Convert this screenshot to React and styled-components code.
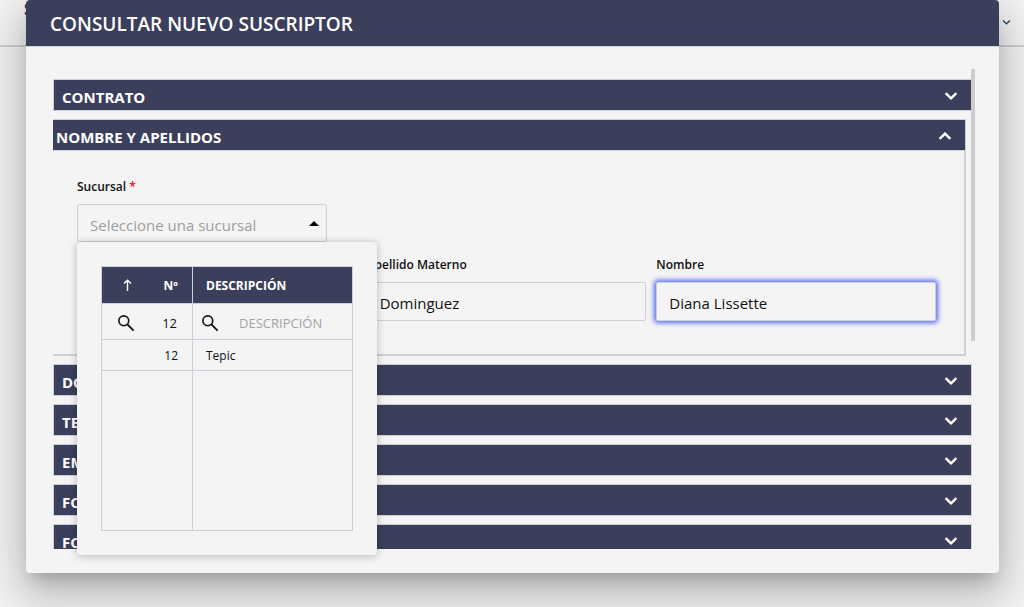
import React from "react";
import styled, { createGlobalStyle } from "styled-components";

const NAVY = "#3c3f5c";
const SURFACE = "#f4f4f4";
const LINE = "#cdd0da";

const GlobalStyle = createGlobalStyle`
  * { box-sizing: border-box; }
  body {
    margin: 0;
    background: #f3f3f3;
    color: #111;
    font-family: "Open Sans", "Noto Sans", sans-serif;
    overflow: hidden;
  }
  input, select, button { font-family: inherit; margin: 0; }
`;

const Page = styled.div`
  display: grid;
  min-height: 100vh;
  grid-template: "stack" 1fr / 1fr;
`;

const TopBar = styled.header`
  grid-area: stack;
  align-self: start;
  display: flex;
  align-items: flex-start;
  justify-content: space-between;
  height: 47px;
  padding: 0 13px 0 24px;
  border-bottom: 2px solid #cfcfcf;
`;

const Brand = styled.span`
  color: #1d2a5c;
  font-size: 16px;
  font-weight: 700;
  line-height: 18px;
`;

const MenuButton = styled.button`
  display: flex;
  padding: 19px 0 0;
  border: 0;
  background: none;
`;

const Dialog = styled.section`
  grid-area: stack;
  align-self: start;
  position: relative;
  margin: 0 25px 0 26px;
  border-radius: 4px;
  background: ${SURFACE};
  box-shadow:
    0 11px 15px -7px rgba(0, 0, 0, 0.2),
    0 24px 38px 3px rgba(0, 0, 0, 0.14),
    0 9px 46px 8px rgba(0, 0, 0, 0.12);
`;

const DialogHeader = styled.header`
  padding: 10px 24px 8px;
  border-bottom: 1px solid ${LINE};
  border-radius: 4px 4px 0 0;
  background: ${NAVY};
`;

const DialogTitle = styled.h1`
  margin: 0;
  color: #fff;
  font-size: 19px;
  font-weight: 600;
  line-height: 28px;
`;

const DialogBody = styled.div`
  display: flex;
  padding: 22px 24px 24px 27px;
`;

const Accordion = styled.div`
  flex: 1;
  display: flex;
  flex-direction: column;
  gap: 8px;
  height: calc(100vh - 127px);
  padding-top: 10px;
  overflow: hidden;
`;

const ScrollThumb = styled.div`
  z-index: 1;
  width: 4px;
  height: 272px;
  margin-left: -1px;
  background: #cdcdcd;
`;

const Panel = styled.section`
  flex: none;
  margin-right: ${(p) => (p.$open ? "6px" : "0")};
`;

const PanelHeading = styled.h2`
  margin: 0;
`;

const PanelToggle = styled.button`
  display: flex;
  align-items: center;
  justify-content: space-between;
  width: 100%;
  height: 32px;
  padding: ${(p) => (p.$open ? "4px 13px 0 3px" : "4px 13px 0 8px")};
  border: 1px solid ${LINE};
  border-left-width: ${(p) => (p.$open ? "0" : "1px")};
  background: ${NAVY};
  color: #fff;
  font-size: 15px;
  font-weight: 700;
  line-height: 20px;
  text-align: left;
`;

const PanelContent = styled.div`
  padding: 27px 28px 33px 24px;
  border: solid #d0d0d0;
  border-width: 0 2px 2px 0;
`;

const FieldRow = styled.div`
  display: grid;
  grid-template-columns: repeat(3, 1fr);
  gap: 10px;
  margin-top: 14px;
`;

const Field = styled.div`
  display: flex;
  flex-direction: column;
  gap: 8px;
  min-width: 0;
`;

const Label = styled.label`
  color: #111;
  font-size: 12px;
  font-weight: 600;
  line-height: 18px;
`;

const Required = styled.span`
  color: #f00;
`;

const TextInput = styled.input`
  width: 100%;
  height: 39px;
  padding: 2px 12px 0;
  border: 1px solid ${LINE};
  border-radius: 2px;
  outline: 0;
  background: ${SURFACE};
  color: #111;
  font-size: 15px;
  box-shadow: ${(p) => (p.$focused ? "0 0 5px 2px #5668ee" : "none")};
`;

const SelectBox = styled.div`
  display: grid;
  align-items: center;
  width: 250px;
  height: 38px;
  border: 1px solid ${LINE};
  border-radius: 2px;

  > * { grid-area: 1 / 1; }
  > svg { justify-self: end; margin-right: 7px; pointer-events: none; }
`;

const Select = styled.select`
  appearance: none;
  width: 100%;
  height: 36px;
  padding: 4px 28px 0 12px;
  border: 0;
  outline: 0;
  background: transparent;
  color: #9e9e9e;
  font-size: 15px;
`;

const Popup = styled.div`
  position: absolute;
  z-index: 2;
  width: 300px;
  padding: 24px;
  border-radius: 4px;
  background: ${SURFACE};
  box-shadow: 0 1px 8px rgba(0, 0, 0, 0.26);
`;

const Grid = styled.table`
  width: 100%;
  table-layout: fixed;
  border-collapse: collapse;
  font-size: 12px;

  th, td { border: 1px solid ${LINE}; }
`;

const HeadCell = styled.th`
  width: ${(p) => p.$width || "auto"};
  height: 37px;
  padding: 0 14px 0 13px;
  background: ${NAVY};
  color: #fff;
  font-size: 12px;
  font-weight: 700;
  text-align: left;
`;

const HeadContent = styled.div`
  display: flex;
  align-items: center;
  justify-content: space-between;
  padding-left: 8px;
`;

const FilterCell = styled.td`
  height: 36px;
  padding: 2px 15px 0 ${(p) => (p.$narrow ? "15px" : "8px")};
`;

const FilterBox = styled.div`
  display: flex;
  align-items: center;
  justify-content: space-between;
  gap: ${(p) => (p.$narrow ? "8px" : "20px")};
`;

const FilterInput = styled.input`
  flex: 1;
  min-width: 0;
  height: 28px;
  padding: 0;
  border: 0;
  outline: 0;
  background: transparent;
  color: #111;
  font-size: 13px;
  text-align: ${(p) => p.$align || "left"};

  &::placeholder { color: #a2a2a2; opacity: 1; }
`;

const Cell = styled.td`
  height: ${(p) => (p.$filler ? "160px" : "31px")};
  padding: 0 14px 0 13px;
  font-size: 12px;
  text-align: ${(p) => p.$align || "left"};
`;

const Chevron = ({ up }) => (
  <svg width="14" height="10" viewBox="0 0 14 10" fill="none" aria-hidden="true">
    <path
      d={up ? "M1.6 6.8 L7 1.6 L12.4 6.8" : "M1.6 1.2 L7 6.4 L12.4 1.2"}
      stroke="#fff"
      strokeWidth="2.4"
    />
  </svg>
);

const SearchIcon = () => (
  <svg width="18" height="18" viewBox="0 0 18 18" fill="none" aria-hidden="true">
    <circle cx="6.8" cy="6.8" r="4.9" stroke="#111" strokeWidth="1.6" />
    <path d="M10.4 10.4 L16.6 16.6" stroke="#111" strokeWidth="1.9" />
  </svg>
);

const SortArrow = () => (
  <svg width="9" height="12" viewBox="0 0 9 12" fill="none" aria-hidden="true">
    <path d="M4.5 12 V1.4 M1 4.6 L4.5 1.2 L8 4.6" stroke="#fff" strokeWidth="1.4" />
  </svg>
);

function BranchPicker() {
  return (
    <Popup>
      <Grid>
        <thead>
          <tr>
            <HeadCell $width="91px">
              <HeadContent>
                <SortArrow />
                <span>Nº</span>
              </HeadContent>
            </HeadCell>
            <HeadCell>DESCRIPCIÓN</HeadCell>
          </tr>
        </thead>
        <tbody>
          <tr>
            <FilterCell $narrow>
              <FilterBox $narrow>
                <SearchIcon />
                <FilterInput aria-label="Filtrar Nº" defaultValue="12" $align="right" />
              </FilterBox>
            </FilterCell>
            <FilterCell>
              <FilterBox>
                <SearchIcon />
                <FilterInput aria-label="Filtrar descripción" placeholder="DESCRIPCIÓN" />
              </FilterBox>
            </FilterCell>
          </tr>
          <tr>
            <Cell $align="right">12</Cell>
            <Cell>Tepic</Cell>
          </tr>
          <tr>
            <Cell $filler />
            <Cell $filler />
          </tr>
        </tbody>
      </Grid>
    </Popup>
  );
}

function AccordionPanel({ title, open, children }) {
  return (
    <Panel $open={open}>
      <PanelHeading>
        <PanelToggle type="button" aria-expanded={!!open} $open={open}>
          {title}
          <Chevron up={open} />
        </PanelToggle>
      </PanelHeading>
      {open && <PanelContent>{children}</PanelContent>}
    </Panel>
  );
}

export default function App() {
  return (
    <>
      <GlobalStyle />
      <Page>
        <TopBar>
          <Brand>S</Brand>
          <MenuButton type="button" aria-label="Menú">
            <svg width="9" height="7" viewBox="0 0 9 7" fill="none" aria-hidden="true">
              <path d="M1 1.4 L4.5 4.8 L8 1.4" stroke="#27506f" strokeWidth="1.4" />
            </svg>
          </MenuButton>
        </TopBar>
        <Dialog role="dialog" aria-labelledby="dialog-title">
          <DialogHeader>
            <DialogTitle id="dialog-title">CONSULTAR NUEVO SUSCRIPTOR</DialogTitle>
          </DialogHeader>
          <DialogBody>
            <Accordion>
              <AccordionPanel title="CONTRATO" />
              <AccordionPanel title="NOMBRE Y APELLIDOS" open>
                <Field>
                  <Label htmlFor="sucursal">
                    Sucursal <Required>*</Required>
                  </Label>
                  <SelectBox>
                    <Select id="sucursal" defaultValue="">
                      <option value="">Seleccione una sucursal</option>
                      <option value="12">Tepic</option>
                    </Select>
                    <svg width="10" height="5" viewBox="0 0 10 5" aria-hidden="true">
                      <path d="M0 5 L5 0 L10 5 Z" fill="#000" />
                    </svg>
                  </SelectBox>
                </Field>
                <BranchPicker />
                <FieldRow>
                  <Field>
                    <Label htmlFor="paterno">Apellido Paterno</Label>
                    <TextInput id="paterno" />
                  </Field>
                  <Field>
                    <Label htmlFor="materno">Apellido Materno</Label>
                    <TextInput id="materno" defaultValue="Dominguez" />
                  </Field>
                  <Field>
                    <Label htmlFor="nombre">Nombre</Label>
                    <TextInput id="nombre" defaultValue="Diana Lissette" $focused />
                  </Field>
                </FieldRow>
              </AccordionPanel>
              <AccordionPanel title="DOMICILIO" />
              <AccordionPanel title="TELÉFONOS" />
              <AccordionPanel title="EMAIL" />
              <AccordionPanel title="FORMA" />
              <AccordionPanel title="FOTOS" />
            </Accordion>
            <ScrollThumb />
          </DialogBody>
        </Dialog>
      </Page>
    </>
  );
}
